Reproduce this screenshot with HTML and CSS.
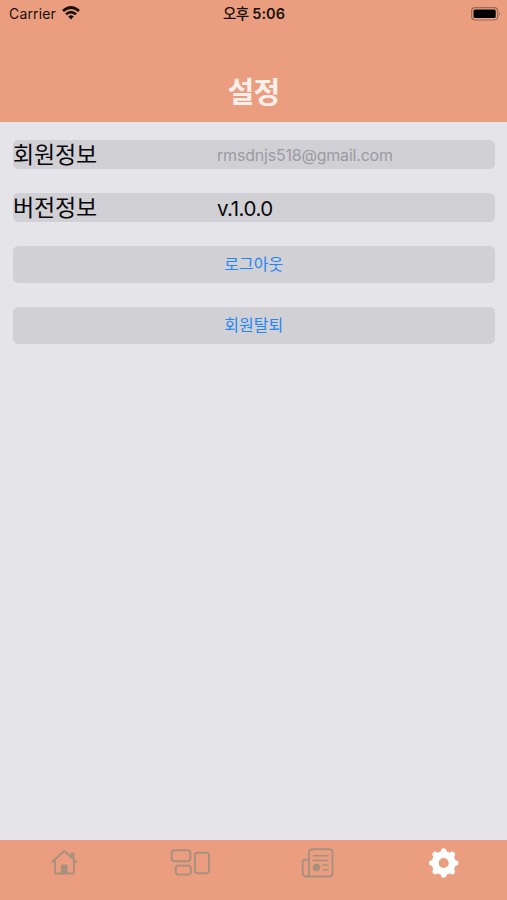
FILE: index.html
```html
<!DOCTYPE html>
<html lang="ko">
<head>
<meta charset="utf-8">
<title>설정</title>
<link rel="stylesheet" href="styles.css">
</head>
<body>
<header class="header">
  <div class="status">
    <div class="carrier"><span>Carrier</span>
      <svg width="18" height="14" viewBox="0 0 18 14" fill="none" stroke="#17100d" stroke-width="2.7"><path d="M1 5.1Q9-2.1 17 5.1"/><path d="M4 8.3Q9 3.8 14 8.3"/><path d="M6.2 10.5Q9 8.2 11.8 10.5L9 13.4Z" fill="#17100d" stroke="none"/></svg>
    </div>
    <div class="time"><span class="meridiem">오후</span> 5:06</div>
    <svg class="battery" width="30" height="14" viewBox="0 0 30 14"><rect x=".6" y=".6" width="26" height="12.4" rx="3.5" fill="none" stroke="#9d6953" stroke-width="1.2"/><rect x="2.5" y="2.5" width="22.2" height="8.6" rx="1.6" fill="#000"/><path d="M28 4.8Q30 6.8 28 8.8Z" fill="#9d6953"/></svg>
  </div>
  <h1 class="title">설정</h1>
</header>
<main class="content">
  <div class="row"><span class="label">회원정보</span><span class="email">rmsdnjs518@gmail.com</span></div>
  <div class="row"><span class="label">버전정보</span><span class="version">v.1.0.0</span></div>
  <button class="action">로그아웃</button>
  <button class="action">회원탈퇴</button>
</main>
<nav class="tabs">
  <a class="tab"><svg width="42" height="32" viewBox="-1 0 42 32" fill="none" stroke="#a8907f" stroke-width="1.9" stroke-linecap="round" stroke-linejoin="round"><path d="M9 15 21.3 4 33.5 15M12 13V25.5Q12 26.5 13 26.5H30Q31 26.5 31 25.5V13M28.5 10V6.5H30.5V12"/><path d="M18.5 26V18H24V26Z" fill="#a8907f" stroke-width="1"/></svg></a>
  <a class="tab"><svg width="42" height="32" viewBox="-.8 0 42 32" fill="none" stroke="#a8907f" stroke-width="1.9"><rect x="2" y="3.3" width="18.5" height="11" rx="2.5"/><rect x="6" y="18.6" width="15" height="9" rx="2.5"/><rect x="25.2" y="5.8" width="14" height="20.5" rx="2.5"/></svg></a>
  <a class="tab"><svg width="42" height="32" viewBox="-2 0 42 32" fill="none" stroke="#a8907f" stroke-width="1.9" stroke-linecap="round" stroke-linejoin="round"><path d="M11 27V5.3Q11 2.3 14.3 2.3H31Q34.5 2.3 34.5 5.3V25.5Q34.5 29.5 31 29.5H8Q4.7 29.5 4.7 26V14.5Q4.7 12.7 6.7 12.7H11V26Q11 29.5 8 29.5"/><path d="M15.5 8.7H30M15.5 13.5H30M25 18H30M25 23H30" stroke-width="1.5"/><circle cx="18.5" cy="20.5" r="3.7" fill="#a8907f" stroke="none"/></svg></a>
  <a class="tab"><svg width="42" height="32" viewBox="0 0 42 32"><g fill="none" stroke="#fff"><circle cx="20.7" cy="16" r="8.5" stroke-width="7"/><path d="M20.7 6V4M20.7 26V28M10.7 16H8.7M30.7 16H32.7M13.6 8.9 12.2 7.5M27.8 23.1 29.2 24.5M13.6 23.1 12.2 24.5M27.8 8.9 29.2 7.5" stroke-width="5.5" stroke-linecap="round"/></g></svg></a>
</nav>
</body>
</html>
```
FILE: styles.css
```css
* { box-sizing: border-box; }
body {
  margin: 0;
  height: 900px;
  display: flex;
  flex-direction: column;
  overflow: hidden;
  background: #e5e4e9;
  color: #08080a;
  font-family: Inter, "Noto Sans CJK KR", sans-serif;
}
.header { height: 122px; background: #eb9e7f; }
.status {
  height: 28px;
  padding: 0 6px 0 9px;
  display: grid;
  grid-template-columns: 1fr auto 1fr;
  align-items: center;
  font-size: 14px;
  line-height: 28px;
  color: #17100d;
}
.carrier { display: flex; align-items: center; gap: 6px; letter-spacing: .15px; }
.carrier svg { margin-bottom: 2px; }
.time { font-weight: 600; font-size: 14.5px; white-space: nowrap; padding-right: 2px; }
.meridiem { font-size: 14.5px; font-weight: 500; letter-spacing: -.5px; }
.battery { justify-self: end; margin-bottom: 1px; }
.title {
  margin: 42px 0 0;
  text-align: center;
  font-size: 29px;
  line-height: 46px;
  font-weight: 700;
  letter-spacing: -.8px;
  color: #fcefeb;
}
.content {
  flex: 1;
  display: flex;
  flex-direction: column;
  gap: 23.5px;
  padding: 18px 12.5px 0 13px;
}
.row {
  height: 29.3px;
  display: grid;
  grid-template-columns: 204px 1fr;
  align-items: center;
  border-radius: 5.5px;
  background: #d1d0d5;
  line-height: 29px;
}
.label { font-size: 23px; letter-spacing: -.2px; white-space: nowrap; padding-top: 1px; }
.email { font-size: 16px; letter-spacing: -.2px; color: #9c9ba1; padding-top: 1px; }
.version { font-size: 20.5px; letter-spacing: -.5px; padding-top: 1px; }
.action {
  height: 37.5px;
  padding: 0;
  border: 0;
  border-radius: 5.5px;
  background: #d1d0d5;
  color: #2386f4;
  font: 16px/37px Inter, "Noto Sans CJK KR", sans-serif;
}
.tabs {
  height: 60px;
  display: grid;
  grid-template-columns: repeat(4, 1fr);
  background: #eb9e7f;
  padding-top: 7px;
}
.tab { display: flex; justify-content: center; align-items: flex-start; }
```
